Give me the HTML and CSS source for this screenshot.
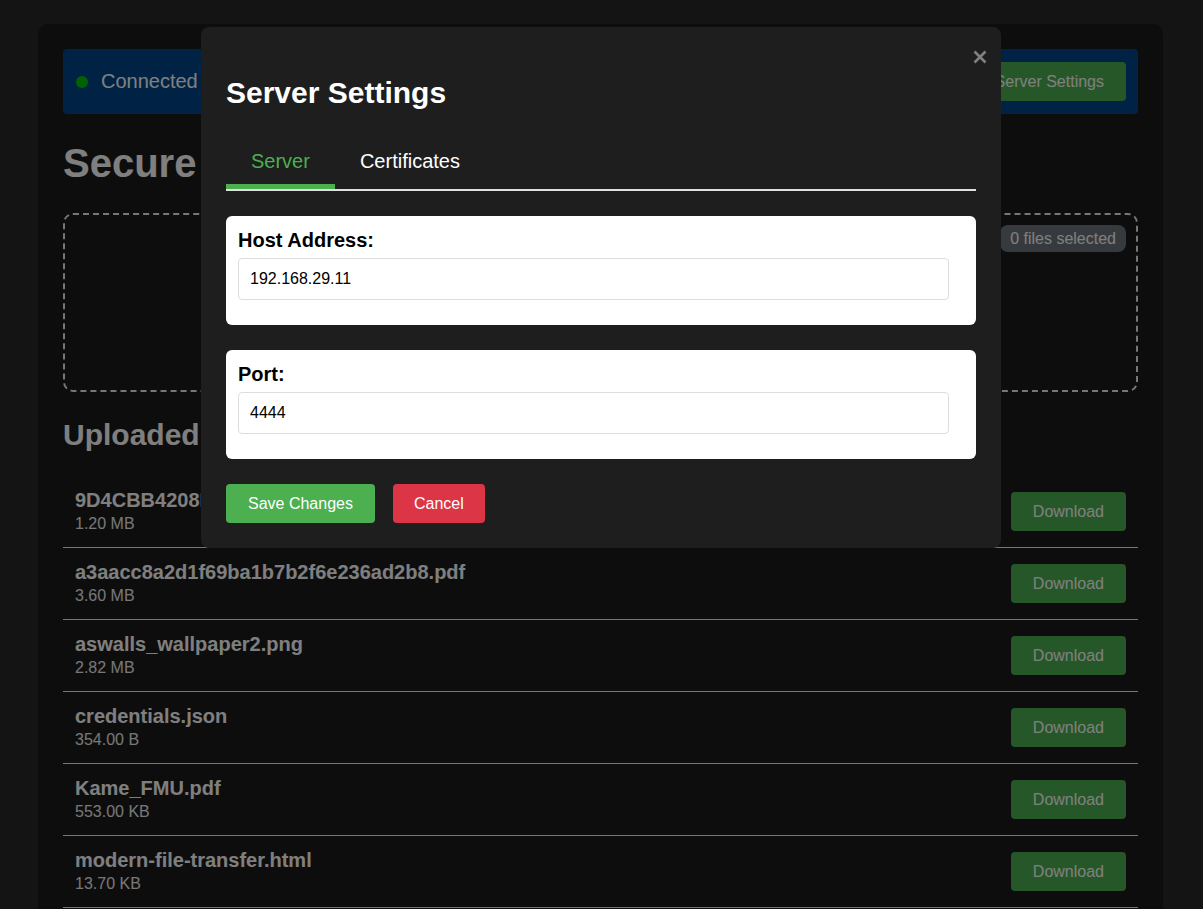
FILE: index.html
```html
<!DOCTYPE html>
<html lang="en">
<head>
<meta charset="utf-8">
<title>Secure File Transfer</title>
<link rel="stylesheet" href="styles.css">
</head>
<body class="modal-open">
  <div class="container">
    <div class="status-bar">
      <div class="status">
        <span class="status-dot"></span>
        <span class="status-text">Connected</span>
      </div>
      <button class="btn btn-green">Server Settings</button>
    </div>

    <h1 class="page-title">Secure File Transfer</h1>

    <div class="dropzone">
      <span class="badge">0 files selected</span>
      <div class="dropzone-inner">
        <div class="dropzone-text">Drag &amp; drop files here or click to browse</div>
        <button class="btn btn-green">Upload Files</button>
      </div>
    </div>

    <h2 class="section-title">Uploaded Files</h2>

    <ul class="file-list">
      <li class="file-row">
        <div class="file-info"><div class="file-name">9D4CBB4208E1F7A6C3B0.jpg</div><div class="file-size">1.20 MB</div></div>
        <button class="btn btn-green btn-dl">Download</button>
      </li>
      <li class="file-row">
        <div class="file-info"><div class="file-name">a3aacc8a2d1f69ba1b7b2f6e236ad2b8.pdf</div><div class="file-size">3.60 MB</div></div>
        <button class="btn btn-green btn-dl">Download</button>
      </li>
      <li class="file-row">
        <div class="file-info"><div class="file-name">aswalls_wallpaper2.png</div><div class="file-size">2.82 MB</div></div>
        <button class="btn btn-green btn-dl">Download</button>
      </li>
      <li class="file-row">
        <div class="file-info"><div class="file-name">credentials.json</div><div class="file-size">354.00 B</div></div>
        <button class="btn btn-green btn-dl">Download</button>
      </li>
      <li class="file-row">
        <div class="file-info"><div class="file-name">Kame_FMU.pdf</div><div class="file-size">553.00 KB</div></div>
        <button class="btn btn-green btn-dl">Download</button>
      </li>
      <li class="file-row">
        <div class="file-info"><div class="file-name">modern-file-transfer.html</div><div class="file-size">13.70 KB</div></div>
        <button class="btn btn-green btn-dl">Download</button>
      </li>
      <li class="file-row">
        <div class="file-info"><div class="file-name">notes.txt</div><div class="file-size">2.10 KB</div></div>
        <button class="btn btn-green btn-dl">Download</button>
      </li>
    </ul>
  </div>

  <div class="overlay">
    <div class="modal">
      <button class="modal-close" aria-label="Close">
        <svg width="14" height="14" viewBox="0 0 14 14"><path d="M1.5 1.5 L12.5 12.5 M12.5 1.5 L1.5 12.5" stroke="#808080" stroke-width="2.6" fill="none"/></svg>
      </button>
      <h2 class="modal-title">Server Settings</h2>
      <div class="tabs">
        <button class="tab tab-active">Server</button>
        <button class="tab">Certificates</button>
      </div>
      <div class="form-card">
        <label class="form-label">Host Address:</label>
        <input class="form-input" type="text" value="192.168.29.11">
      </div>
      <div class="form-card">
        <label class="form-label">Port:</label>
        <input class="form-input" type="text" value="4444">
      </div>
      <div class="modal-actions">
        <button class="btn btn-save">Save Changes</button>
        <button class="btn btn-cancel">Cancel</button>
      </div>
    </div>
  </div>
</body>
</html>
```

FILE: styles.css
```css
* { box-sizing: border-box; }

html, body { height: 100%; }

body {
  margin: 0;
  padding: 24px 38px 0;
  background: #282828;
  font-family: "Liberation Sans", Arial, sans-serif;
  color: #fff;
}

body.modal-open { overflow: hidden; }

.container {
  max-width: 1125px;
  background: #1a1a1a;
  border-radius: 10px;
  padding: 25px;
}

.status-bar {
  display: flex;
  align-items: center;
  justify-content: space-between;
  height: 65px;
  padding: 0 12px 0 13px;
  background: #00468a;
  border-radius: 4px;
}

.status { display: flex; align-items: center; }

.status-dot {
  width: 12px;
  height: 12px;
  border-radius: 50%;
  background: #00c400;
  margin-right: 13px;
}

.status-text { font-size: 20px; color: #fff; }

.btn {
  border: none;
  border-radius: 4px;
  font-family: inherit;
  font-size: 16px;
  line-height: 19px;
  padding: 10px 22px;
  color: #fff;
  cursor: pointer;
}

.btn-green { background: #4caf50; }

.page-title {
  font-size: 40px;
  line-height: 46px;
  font-weight: bold;
  margin: 26px 0 27px;
}

.dropzone {
  position: relative;
  height: 179px;
  border: 2px dashed #eee;
  border-radius: 10px;
  display: flex;
  align-items: center;
  justify-content: center;
}

.dropzone-inner {
  display: flex;
  flex-direction: column;
  align-items: center;
  gap: 16px;
}

.dropzone-text { font-size: 18px; color: #ddd; }

.badge {
  position: absolute;
  top: 10px;
  right: 10px;
  background: #6c757d;
  color: #fff;
  font-size: 16px;
  line-height: 19px;
  padding: 4px 10px;
  border-radius: 8px;
}

.section-title {
  font-size: 30px;
  line-height: 34px;
  font-weight: bold;
  margin: 26px 0 24px;
}

.file-list { list-style: none; margin: 0; padding: 0; }

.file-row {
  display: flex;
  align-items: center;
  justify-content: space-between;
  padding: 13px 12px 14px;
  border-bottom: 1px solid #eee;
}

.file-name {
  font-size: 20px;
  line-height: 23px;
  font-weight: bold;
  color: #fff;
  margin-bottom: 3px;
}

.file-size {
  font-size: 16px;
  line-height: 18px;
  color: #eee;
}

.btn-dl { padding: 10px 22px; }

/* Modal */
.overlay {
  position: fixed;
  top: 0;
  bottom: 0;
  left: 0;
  right: 1px;
  background: rgba(0, 0, 0, 0.5);
  box-shadow: 1px 0 0 rgba(0, 0, 0, 0.5);
}

.modal {
  position: relative;
  width: 800px;
  margin: 27px auto 0;
  background: #1e1e1e;
  border-radius: 8px;
  padding: 25px;
}

.modal-close {
  position: absolute;
  top: 23px;
  right: 14px;
  width: 14px;
  height: 14px;
  padding: 0;
  border: none;
  background: none;
  display: block;
}

.modal-close svg { display: block; }

.modal-title {
  font-size: 30px;
  line-height: 34px;
  font-weight: bold;
  color: #fff;
  margin: 24px 0 26px;
}

.tabs {
  display: flex;
  border-bottom: 2px solid #e0e0e0;
  margin-bottom: 25px;
}

.tab {
  background: none;
  border: none;
  border-bottom: 5px solid transparent;
  font-family: inherit;
  font-size: 20px;
  line-height: 23px;
  padding: 14px 25px 11px;
  color: #fff;
}

.tab-active {
  color: #4caf50;
  border-bottom-color: #4caf50;
}

.form-card {
  background: #fff;
  border-radius: 6px;
  padding: 13px 12px 25px;
  margin-bottom: 25px;
}

.form-label {
  display: block;
  font-size: 20px;
  line-height: 23px;
  font-weight: bold;
  color: #000;
  margin-bottom: 6px;
}

.form-input {
  display: block;
  width: calc(100% - 15px);
  height: 42px;
  padding: 0 11px;
  border: 1px solid #ddd;
  border-radius: 4px;
  font-family: inherit;
  font-size: 16px;
  color: #000;
  background: #fff;
}

.modal-actions {
  display: flex;
  gap: 18px;
}

.btn-save { background: #4caf50; padding: 10px 22px; }
.btn-cancel { background: #dc3545; padding: 10px 21px; }
```
